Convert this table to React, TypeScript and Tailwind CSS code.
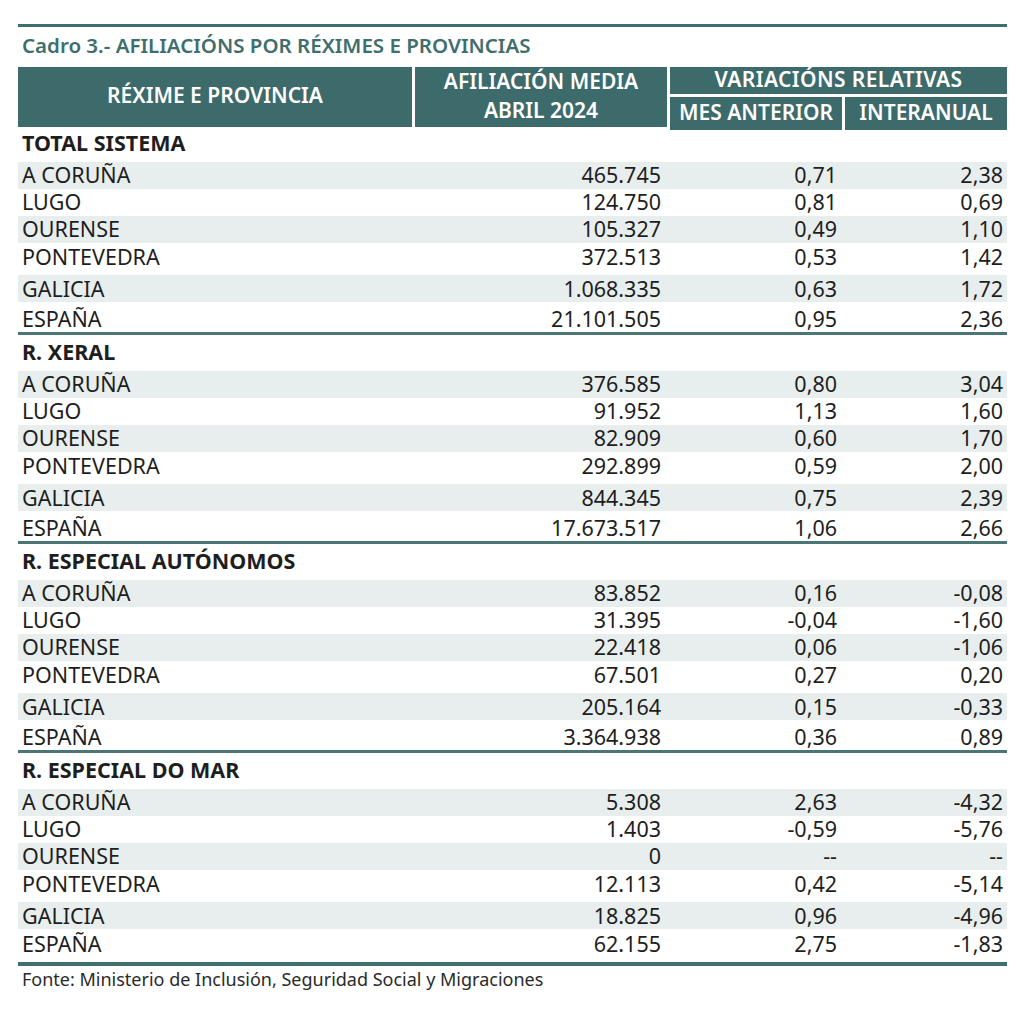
type Row = [string, string, string, string];

const sections: { title: string; rows: Row[] }[] = [
  {
    title: "TOTAL SISTEMA",
    rows: [
      ["A CORUÑA", "465.745", "0,71", "2,38"],
      ["LUGO", "124.750", "0,81", "0,69"],
      ["OURENSE", "105.327", "0,49", "1,10"],
      ["PONTEVEDRA", "372.513", "0,53", "1,42"],
      ["GALICIA", "1.068.335", "0,63", "1,72"],
      ["ESPAÑA", "21.101.505", "0,95", "2,36"],
    ],
  },
  {
    title: "R. XERAL",
    rows: [
      ["A CORUÑA", "376.585", "0,80", "3,04"],
      ["LUGO", "91.952", "1,13", "1,60"],
      ["OURENSE", "82.909", "0,60", "1,70"],
      ["PONTEVEDRA", "292.899", "0,59", "2,00"],
      ["GALICIA", "844.345", "0,75", "2,39"],
      ["ESPAÑA", "17.673.517", "1,06", "2,66"],
    ],
  },
  {
    title: "R. ESPECIAL AUTÓNOMOS",
    rows: [
      ["A CORUÑA", "83.852", "0,16", "-0,08"],
      ["LUGO", "31.395", "-0,04", "-1,60"],
      ["OURENSE", "22.418", "0,06", "-1,06"],
      ["PONTEVEDRA", "67.501", "0,27", "0,20"],
      ["GALICIA", "205.164", "0,15", "-0,33"],
      ["ESPAÑA", "3.364.938", "0,36", "0,89"],
    ],
  },
  {
    title: "R. ESPECIAL DO MAR",
    rows: [
      ["A CORUÑA", "5.308", "2,63", "-4,32"],
      ["LUGO", "1.403", "-0,59", "-5,76"],
      ["OURENSE", "0", "--", "--"],
      ["PONTEVEDRA", "12.113", "0,42", "-5,14"],
      ["GALICIA", "18.825", "0,96", "-4,96"],
      ["ESPAÑA", "62.155", "2,75", "-1,83"],
    ],
  },
];

const cols = "grid grid-cols-[394px_252px_172px_162px] gap-x-[3px]";

// row heights follow the printed table: the last two rows sit a bit apart
const rowStyles = [
  "h-[27px] pb-[1px] bg-[#e8eeee]",
  "h-[27px] pb-[1px]",
  "h-[27px] pb-[1px] bg-[#e8eeee]",
  "h-[28px] pb-[1px]",
  "h-[27px] mt-[4px] bg-[#e8eeee]",
  "h-[30px] pt-[4px]",
];

function DataRow({ row, idx, last }: { row: Row; idx: number; last?: boolean }) {
  const cls = last && idx === 5 ? "h-[33px] pb-[3px]" : rowStyles[idx];
  return (
    <div className={`${cols} items-center ${cls}`}>
      <div className="pl-[4px]">{row[0]}</div>
      <div className="text-right pr-[6px]">{row[1]}</div>
      <div className="text-right pr-[5px]">{row[2]}</div>
      <div className="text-right pr-[4px]">{row[3]}</div>
    </div>
  );
}

export default function App() {
  return (
    <div className="bg-white min-h-[1010px] pt-[24px] pl-[18px] font-['Noto_Sans',sans-serif] text-[#1e1e1e]">
      <div className="w-[989px]">
        {/* Title */}
        <div className="border-t-[3px] border-[#3f6e6e] h-[43px] flex items-center pl-[4px] pb-[3px]">
          <h1 className="text-[20.5px] font-semibold text-[#3f6e6e]">
            Cadro 3.- AFILIACIÓNS POR RÉXIMES E PROVINCIAS
          </h1>
        </div>

        {/* Header */}
        <div className="grid grid-cols-[394px_252px_337px] gap-x-[3px] h-[59px] text-white font-semibold text-[21px]">
          <div className="bg-[#3d6a6a] flex items-center justify-center pb-[2px]">
            RÉXIME E PROVINCIA
          </div>
          <div className="bg-[#3d6a6a] flex flex-col items-center justify-center leading-[29px] pb-[2px]">
            <span>AFILIACIÓN MEDIA</span>
            <span>ABRIL 2024</span>
          </div>
          <div className="flex flex-col gap-y-[3px]">
            <div className="bg-[#3d6a6a] h-[27px] flex items-center justify-center pb-[1px] tracking-[0.4px]">
              VARIACIÓNS RELATIVAS
            </div>
            <div className="grid grid-cols-[172px_162px] gap-x-[3px] h-[29px]">
              <div className="bg-[#3d6a6a] flex items-center justify-center pb-[1px]">MES ANTERIOR</div>
              <div className="bg-[#3d6a6a] flex items-center justify-center pb-[1px]">INTERANUAL</div>
            </div>
          </div>
        </div>

        {/* Body */}
        <div className="text-[21.5px] leading-[22px]">
          {sections.map((s, si) => {
            const last = si === sections.length - 1;
            return (
              <div
                key={s.title}
                className={last ? "border-b-[4px] border-[#3f6e6e]" : "border-b-[3px] border-[#4a7676]"}
              >
                <div className="h-[36px] flex items-center pl-[4px] pb-[2px] font-bold">{s.title}</div>
                {s.rows.map((r, i) => (
                  <DataRow key={r[0]} row={r} idx={i} last={last} />
                ))}
              </div>
            );
          })}
        </div>

        <p className="pl-[4px] text-[18px] text-[#2a2a2a]">
          Fonte: Ministerio de Inclusión, Seguridad Social y Migraciones
        </p>
      </div>
    </div>
  );
}
